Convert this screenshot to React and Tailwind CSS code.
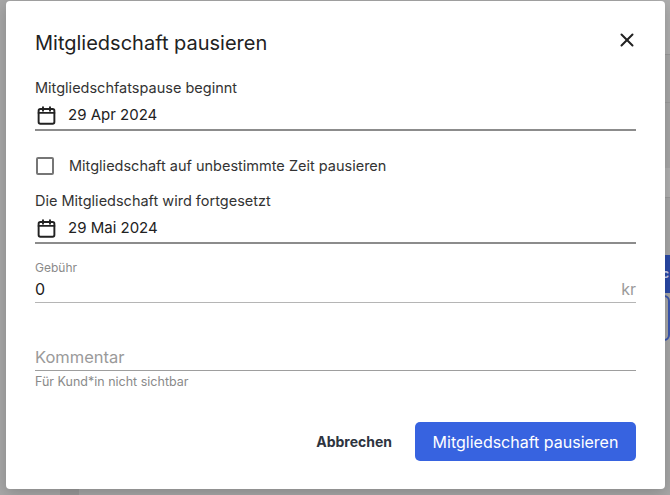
import React, { useState } from 'react';
import { X } from 'lucide-react';

function CalendarIcon() {
  return (
    <svg width="21" height="21" viewBox="0 0 24 24" fill="none" stroke="#222" strokeWidth="2.2" strokeLinecap="round" strokeLinejoin="round">
      <rect x="3" y="4.5" width="18" height="17" rx="2" />
      <path d="M3 9h18" />
      <path d="M8 2.5v4M16 2.5v4" />
    </svg>
  );
}

function DateField({ label, value }) {
  return (
    <div>
      <div className="h-[20px] text-[14.5px] leading-[20px] text-[#333]">{label}</div>
      <div className="mt-[3px] flex h-[30px] items-center gap-[11px] border-b-2 border-[#8c8c8c] pl-[1px]">
        <CalendarIcon />
        <span className="text-[15px] text-[#222]">{value}</span>
      </div>
    </div>
  );
}

export default function App() {
  const [indefinite, setIndefinite] = useState(false);

  return (
    <div className="relative h-[495px] w-[670px] overflow-hidden bg-[#a8a8a8] font-['Inter',sans-serif]">
      {/* page behind the backdrop */}
      <div className="flex h-full justify-end">
        <div className="flex w-[40px] flex-col">
          <div className="h-[55px] border-b border-[#9a9a9a] bg-[#b0b0b0]" />
          <div className="h-[48px] border-b border-[#9c9c9c]" />
          <div className="h-[65px]" />
          <div className="h-[30px] border-b border-[#9c9c9c] bg-[#b2b2b2]" />
          <div className="h-[57px]" />
          <div className="flex h-[38px] items-center justify-end bg-[#2a4aa8] pr-[1px] text-[12px] font-bold text-[#c9d2ee]">sc</div>
          <div className="mt-[2px] h-[46px] rounded-[6px] border-2 border-[#3a57b0]" />
        </div>
      </div>
      <div className="absolute bottom-0 left-[60px] h-[6px] w-[19px] bg-[#9a9a9a]" />

      {/* dialog */}
      <div className="absolute left-[6px] top-[1px] h-[488px] w-[659px] rounded-[4px] bg-white px-[29px] pt-[28px] shadow-[0_4px_16px_rgba(0,0,0,0.2)]">
        <div className="flex h-[28px] items-center justify-between">
          <h2 className="text-[20px] leading-[28px] text-[#222]">Mitgliedschaft pausieren</h2>
          <button className="-mt-[6px] mr-[-2px] text-[#222]">
            <X size={22} strokeWidth={2.2} />
          </button>
        </div>

        <div className="mt-[21px]">
          <DateField label="Mitgliedschfatspause beginnt" value="29 Apr 2024" />
        </div>

        <label className="mt-[23px] flex h-[24px] cursor-pointer items-center gap-[15px]">
          <input
            type="checkbox"
            checked={indefinite}
            onChange={(e) => setIndefinite(e.target.checked)}
            className="peer sr-only"
          />
          <span className="ml-[1px] h-[18px] w-[18px] rounded-[2px] border-2 border-[#767676] peer-checked:bg-[#3763e0]" />
          <span className="text-[14.5px] text-[#333]">Mitgliedschaft auf unbestimmte Zeit pausieren</span>
        </label>

        <div className="mt-[13px]">
          <DateField label="Die Mitgliedschaft wird fortgesetzt" value="29 Mai 2024" />
        </div>

        <div className="mt-[16px] h-[16px] text-[12px] leading-[16px] text-[#8a8a8a]">Gebühr</div>
        <div className="flex h-[27px] items-center justify-between border-b border-[#b5b5b5]">
          <span className="text-[16px] text-[#222]">0</span>
          <span className="text-[16px] text-[#9a9a9a]">kr</span>
        </div>

        <div className="mt-[42px] flex h-[26px] items-center border-b border-[#9e9e9e]">
          <span className="text-[16.5px] text-[#9a9a9a]">Kommentar</span>
        </div>
        <div className="mt-[3px] h-[16px] text-[12.5px] leading-[16px] text-[#8a8a8a]">Für Kund*in nicht sichtbar</div>

        <div className="mt-[32px] flex items-center justify-end gap-[23px]">
          <button className="text-[14px] font-bold text-[#2e3440]">Abbrechen</button>
          <button className="h-[39px] w-[221px] rounded-[5px] bg-[#3763e0] text-[16px] text-white">
            Mitgliedschaft pausieren
          </button>
        </div>
      </div>
    </div>
  );
}
